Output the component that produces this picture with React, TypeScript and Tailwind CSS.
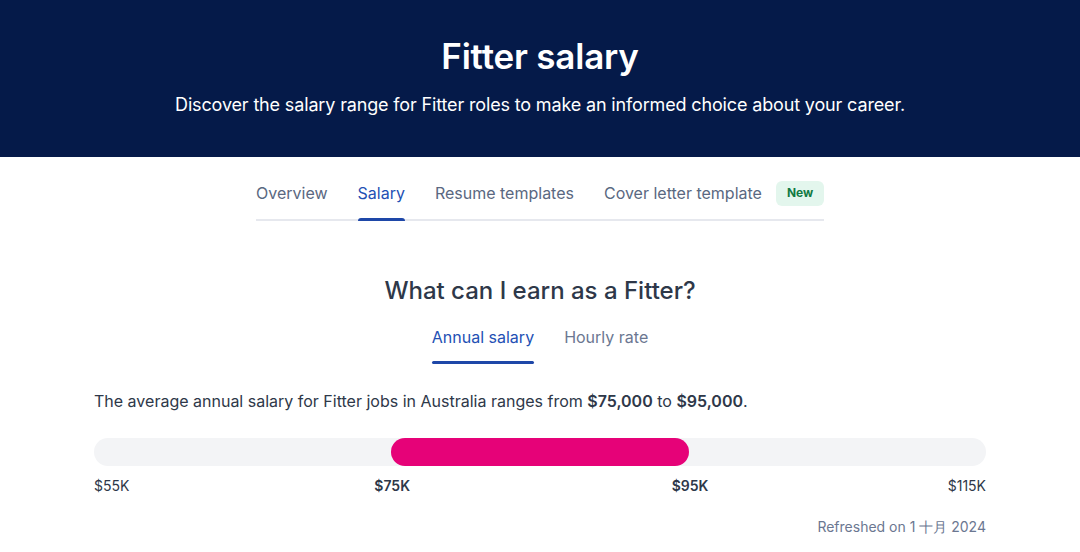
export default function App() {
    const min = 55;
    const max = 115;
    const low = 75;
    const high = 95;
    const left = ((low - min) / (max - min)) * 100;
    const width = ((high - low) / (max - min)) * 100;

    return (
        <div className="min-h-[552px] bg-white font-['Inter',_'Noto_Sans',_sans-serif] text-[#2e3849]">
            <header className="bg-[#051a49] h-[157px] flex flex-col items-center pt-[34px]">
                <h1 className="text-white text-[35px] font-semibold leading-[44px] tracking-[-0.2px]">Fitter salary</h1>
                <p className="text-white text-[18px] leading-[28px] mt-[13px] tracking-[-0.15px]">
                    Discover the salary range for Fitter roles to make an informed choice about your career.
                </p>
            </header>

            <nav className="flex justify-center">
                <div className="w-[568px] flex items-center whitespace-nowrap border-b-2 border-[#e6e8ee] h-[64px] pt-[10px]">
                    <a className="shrink-0 text-[16px] text-[#5a6881] h-full flex items-center pr-[15px]">Overview</a>
                    <a className="shrink-0 relative text-[16px] text-[#2350b4] h-full flex items-center px-[15px]">
                        Salary
                        <span className="absolute left-[15px] right-[15px] -bottom-[2px] h-[3px] rounded-t bg-[#1e47a8]" />
                    </a>
                    <a className="shrink-0 text-[16px] text-[#5a6881] h-full flex items-center px-[15px]">Resume templates</a>
                    <a className="shrink-0 text-[16px] text-[#5a6881] h-full flex items-center pl-[15px] gap-[14px]">
                        Cover letter template
                        <span className="bg-[#e3f6ed] text-[#117a43] text-[12px] font-bold rounded-md px-[11px] h-[25px] flex items-center">
                            New
                        </span>
                    </a>
                </div>
            </nav>

            <section className="flex flex-col items-center pt-[54px]">
                <h2 className="text-[24px] font-medium leading-[32px] text-[#2e3849]">What can I earn as a Fitter?</h2>
                <div className="flex mt-[18px] gap-[30px]">
                    <button className="relative text-[16px] text-[#2350b4] pb-[15px]">
                        Annual salary
                        <span className="absolute left-0 right-0 bottom-0 h-[3px] rounded bg-[#1e47a8]" />
                    </button>
                    <button className="text-[16px] text-[#6b7791] pb-[15px]">Hourly rate</button>
                </div>
            </section>

            <section className="w-[892px] mx-auto mt-[25px]">
                <p className="text-[16px] leading-[24px] text-[#2e3849]">
                    The average annual salary for Fitter jobs in Australia ranges from{' '}
                    <span className="font-semibold">$75,000</span> to <span className="font-semibold">$95,000</span>.
                </p>
                <div className="relative h-[28px] rounded-full bg-[#f3f4f6] mt-[25px]">
                    <div
                        className="absolute top-0 h-full rounded-full bg-[#e60278]"
                        style={{ left: `${left}%`, width: `${width}%` }}
                    />
                </div>
                <div className="grid grid-cols-3 mt-[10px] text-[14px] leading-[20px]">
                    <span className="text-[#2e3849]">$55K</span>
                    <div className="flex justify-between">
                        <span className="font-semibold -ml-[17px]">$75K</span>
                    </div>
                    <div className="flex justify-between">
                        <span className="font-semibold -ml-[17px]">$95K</span>
                        <span>$115K</span>
                    </div>
                </div>
                <p className="text-right text-[14px] text-[#6b7791] mt-[20px]">
                    Refreshed on 1 十月 2024
                </p>
            </section>
        </div>
    );
}
